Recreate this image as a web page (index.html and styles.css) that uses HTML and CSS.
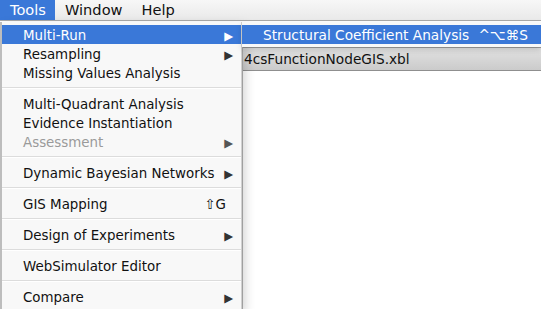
FILE: index.html
```html
<!DOCTYPE html>
<html lang="en">

<head>
    <meta charset="UTF-8">
    <meta name="viewport" content="width=device-width, initial-scale=1.0">
    <title>Tools Menu</title>
    <link rel="stylesheet" href="styles.css">
</head>

<body>
    <div class="menubar">
        <span class="menubar-item active">Tools</span>
        <span class="menubar-item">Window</span>
        <span class="menubar-item">Help</span>
    </div>

    <div class="workspace">
        <ul class="menu">
            <li class="item selected"><span>Multi-Run</span><span class="arrow">&#9654;</span></li>
            <li class="item"><span>Resampling</span><span class="arrow">&#9654;</span></li>
            <li class="item"><span>Missing Values Analysis</span></li>
            <li class="sep"></li>
            <li class="item"><span>Multi-Quadrant Analysis</span></li>
            <li class="item"><span>Evidence Instantiation</span></li>
            <li class="item disabled"><span>Assessment</span><span class="arrow">&#9654;</span></li>
            <li class="sep"></li>
            <li class="item"><span>Dynamic Bayesian Networks</span><span class="arrow">&#9654;</span></li>
            <li class="sep"></li>
            <li class="item"><span>GIS Mapping</span><span class="shortcut">&#8679;G</span></li>
            <li class="sep"></li>
            <li class="item"><span>Design of Experiments</span><span class="arrow">&#9654;</span></li>
            <li class="sep"></li>
            <li class="item"><span>WebSimulator Editor</span></li>
            <li class="sep"></li>
            <li class="item"><span>Compare</span><span class="arrow">&#9654;</span></li>
        </ul>

        <div class="side">
            <ul class="submenu">
                <li class="item selected"><span>Structural Coefficient Analysis</span><span class="shortcut">^&#8997;&#8984;S</span></li>
            </ul>
            <div class="window">
                <div class="tabstrip">4csFunctionNodeGIS.xbl</div>
                <div class="content"></div>
            </div>
        </div>
    </div>
</body>

</html>
```

FILE: styles.css
```css
body {
    margin: 0;
    width: 541px;
    height: 309px;
    overflow: hidden;
    background-color: #fff;
    font-family: 'DejaVu Sans', 'Lucida Grande', sans-serif;
    font-size: 13.7px;
    color: #111;
}

ul {
    list-style: none;
    margin: 0;
    padding: 0;
}

.menubar {
    display: flex;
    height: 21px;
    background: linear-gradient(#f7f7f7, #e9e9e9);
    border-bottom: 1px solid #a8a8a8;
    box-sizing: border-box;
    font-size: 14.6px;
}

.menubar-item {
    padding: 0 9px 0 10px;
    line-height: 20px;
}

.menubar-item.active {
    background-color: #3a78d8;
    color: #fff;
}

.workspace {
    display: flex;
    align-items: flex-start;
}

.menu {
    position: relative;
    z-index: 2;
    width: 242px;
    flex-shrink: 0;
    padding: 3px 0 4px;
    margin-top: 1px;
    box-sizing: border-box;
    background-color: #f8f8f8;
    border-left: 2px solid #bdbdbd;
    border-right: 1px solid #d0d0d0;
    box-shadow: 3px 4px 10px rgba(0, 0, 0, 0.18);
    font-size: 13.4px;
}

.item {
    display: flex;
    justify-content: space-between;
    align-items: center;
    height: 19px;
    padding: 0 8px 0 21px;
    white-space: nowrap;
}

.menu .item {
    box-sizing: border-box;
    padding-top: 2px;
}

.item.selected {
    background-color: #3a78d8;
    color: #fff;
}

.item.disabled {
    color: #9a9a9a;
}

.arrow {
    flex-shrink: 0;
    font-size: 11.5px;
    color: #333;
}

.selected .arrow {
    color: #fff;
}

.disabled .arrow {
    color: #555;
}

.shortcut {
    padding-right: 7px;
}

.sep {
    height: 1px;
    margin: 5px 0 5px;
    background-color: #dcdcdc;
    border-bottom: 1px solid #fff;
}

.side {
    flex: 1;
    display: flex;
    flex-direction: column;
}

.submenu {
    position: relative;
    z-index: 2;
    padding: 3px 0;
    margin-top: 1px;
    background-color: #f8f8f8;
    box-shadow: 0 3px 6px rgba(0, 0, 0, 0.15);
}

.submenu .item {
    padding: 0 13px 0 21px;
}

.submenu .shortcut {
    padding-right: 0;
}

.window {
    border-left: 1px solid #b5b5b5;
}

.tabstrip {
    height: 22px;
    line-height: 22px;
    padding-left: 1px;
    background: linear-gradient(#e2e2e2, #cbcbcb);
    border-top: 1px solid #9d9d9d;
    border-bottom: 1px solid #8f8f8f;
}

.content {
    height: 260px;
    background-color: #fff;
}
```
